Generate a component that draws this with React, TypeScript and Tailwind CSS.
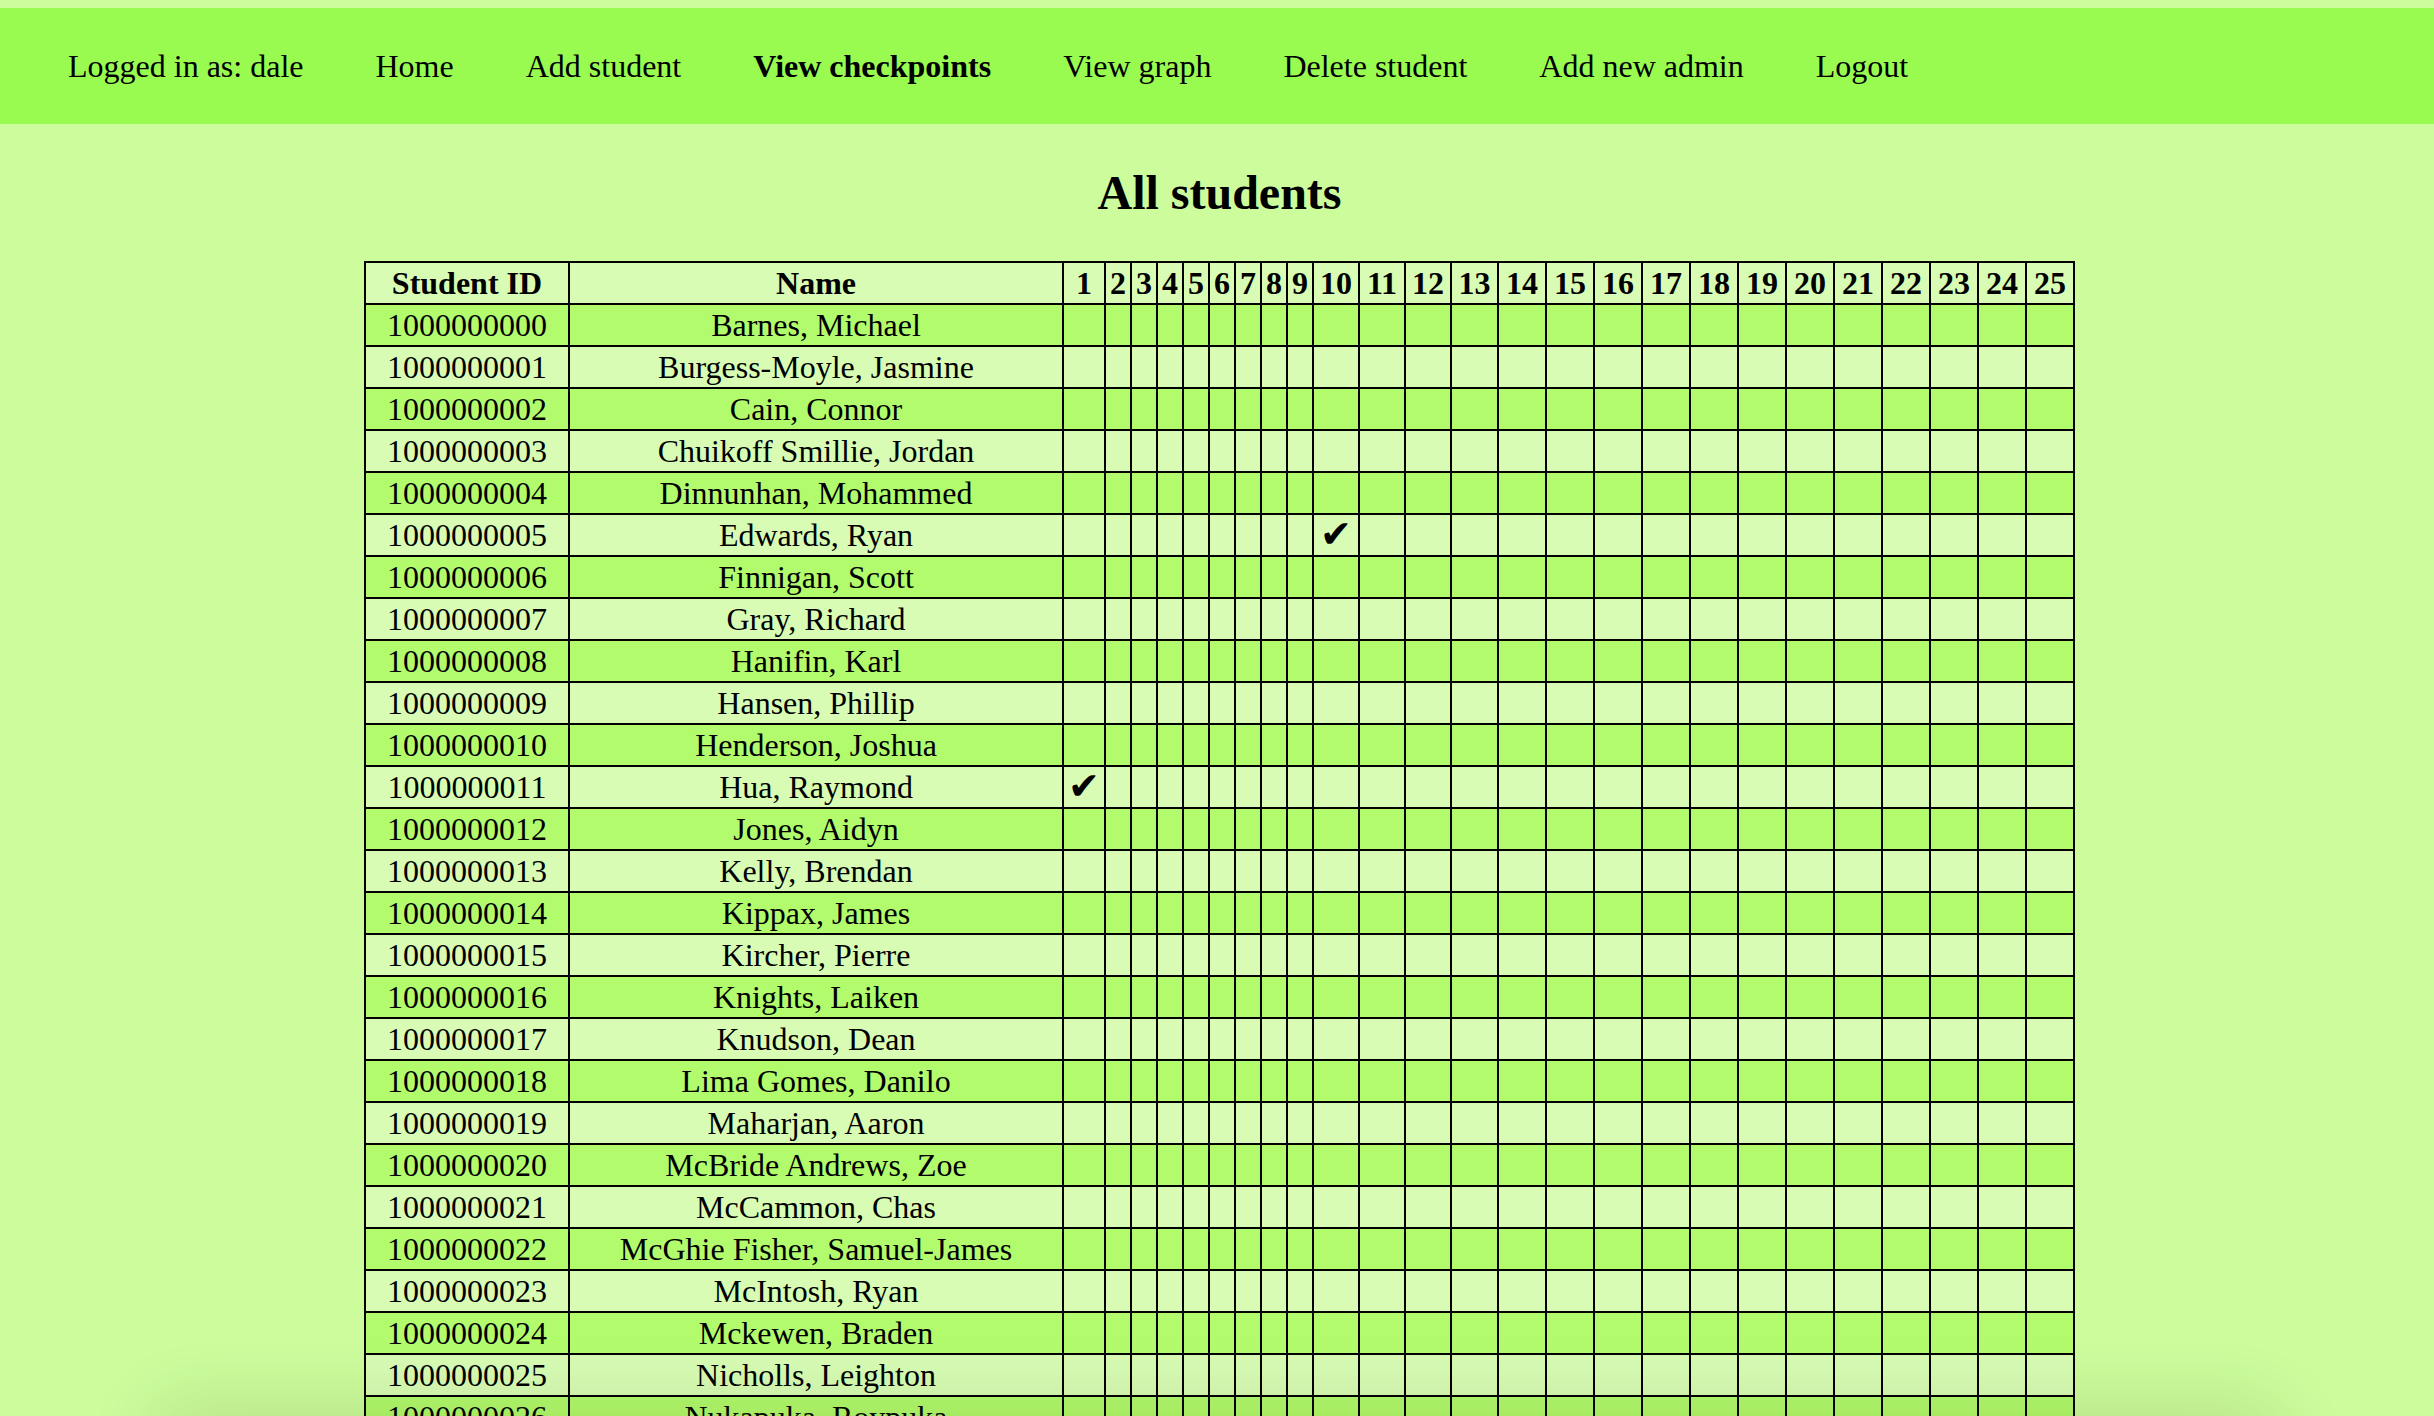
import React from "react";

const students: { id: string; name: string; checks?: number[] }[] = [
  { id: "1000000000", name: "Barnes, Michael" },
  { id: "1000000001", name: "Burgess-Moyle, Jasmine" },
  { id: "1000000002", name: "Cain, Connor" },
  { id: "1000000003", name: "Chuikoff Smillie, Jordan" },
  { id: "1000000004", name: "Dinnunhan, Mohammed" },
  { id: "1000000005", name: "Edwards, Ryan", checks: [10] },
  { id: "1000000006", name: "Finnigan, Scott" },
  { id: "1000000007", name: "Gray, Richard" },
  { id: "1000000008", name: "Hanifin, Karl" },
  { id: "1000000009", name: "Hansen, Phillip" },
  { id: "1000000010", name: "Henderson, Joshua" },
  { id: "1000000011", name: "Hua, Raymond", checks: [1] },
  { id: "1000000012", name: "Jones, Aidyn" },
  { id: "1000000013", name: "Kelly, Brendan" },
  { id: "1000000014", name: "Kippax, James" },
  { id: "1000000015", name: "Kircher, Pierre" },
  { id: "1000000016", name: "Knights, Laiken" },
  { id: "1000000017", name: "Knudson, Dean" },
  { id: "1000000018", name: "Lima Gomes, Danilo" },
  { id: "1000000019", name: "Maharjan, Aaron" },
  { id: "1000000020", name: "McBride Andrews, Zoe" },
  { id: "1000000021", name: "McCammon, Chas" },
  { id: "1000000022", name: "McGhie Fisher, Samuel-James" },
  { id: "1000000023", name: "McIntosh, Ryan" },
  { id: "1000000024", name: "Mckewen, Braden" },
  { id: "1000000025", name: "Nicholls, Leighton" },
  { id: "1000000026", name: "Nukapuka, Roypuka" },
];

const checkpoints = Array.from({ length: 25 }, (_, i) => i + 1);

// widths read off the screenshot, narrow single digits, wider two digit columns
const colWidth = (n: number) => {
  if (n === 1) return 42;
  if (n < 10) return 26;
  if (n <= 12) return 46;
  if (n === 13) return 47;
  return 48;
};

const navItems = [
  { label: "Home" },
  { label: "Add student" },
  { label: "View checkpoints", active: true },
  { label: "View graph" },
  { label: "Delete student" },
  { label: "Add new admin" },
  { label: "Logout" },
];

const cell = "border-2 border-black p-0 h-[42px] text-center align-middle whitespace-nowrap";

export default function App() {
  return (
    <div className="min-h-screen bg-[#ccfc9c] pt-[8px] text-black font-['Liberation_Serif',serif] text-[32px] leading-[1.15]">
      <nav className="flex items-center h-[116px] bg-[#99fb50] pl-[68px] gap-[72px]">
        <span>Logged in as: dale</span>
        {navItems.map((item) => (
          <a key={item.label} href="#" className={item.active ? "font-bold" : ""}>
            {item.label}
          </a>
        ))}
      </nav>

      <h2 className="text-center font-bold text-[48px] leading-none mt-[45px] mb-[44px] pl-[5px]">All students</h2>

      <div className="flex justify-center pl-[5px]">
        <table className="table-fixed border-collapse border-2 border-black w-[1711px]">
          <colgroup>
            <col className="w-[204px]" />
            <col className="w-[494px]" />
            {checkpoints.map((n) => (
              <col key={n} style={{ width: colWidth(n) }} />
            ))}
          </colgroup>
          <thead>
            <tr className="bg-[#d8fcb4]">
              <th className={cell}>Student ID</th>
              <th className={cell}>Name</th>
              {checkpoints.map((n) => (
                <th key={n} className={cell}>
                  {n}
                </th>
              ))}
            </tr>
          </thead>
          <tbody>
            {students.map((s, i) => (
              <tr key={s.id} className={i % 2 === 0 ? "bg-[#b2fb6c]" : "bg-[#d8fcb4]"}>
                <td className={cell}>{s.id}</td>
                <td className={cell}>{s.name}</td>
                {checkpoints.map((n) => (
                  <td key={n} className={cell}>
                    {s.checks?.includes(n) && (
                      <span className="font-['DejaVu_Sans',sans-serif] text-[38px] leading-none">✔</span>
                    )}
                  </td>
                ))}
              </tr>
            ))}
          </tbody>
        </table>
      </div>

      {/* soft shadow creeping in from the bottom edge of the window */}
      <div className="pointer-events-none fixed left-[160px] right-[160px] bottom-[-50px] h-[50px] rounded-[60px] shadow-[0_0_70px_10px_rgba(40,60,0,0.14)]" />
    </div>
  );
}
